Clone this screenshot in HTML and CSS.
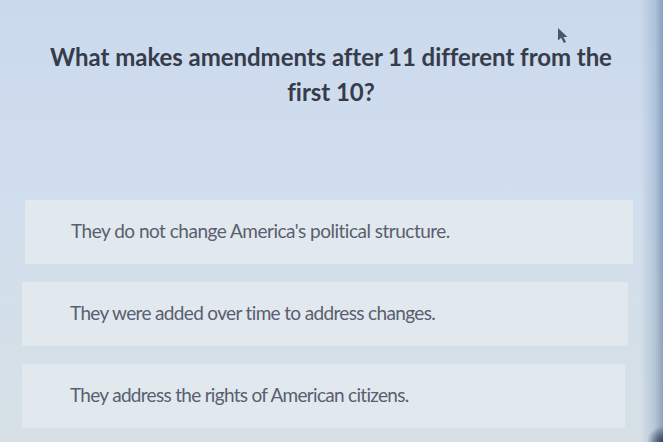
FILE: index.html
```html
<!DOCTYPE html>
<html lang="en">
<head>
<meta charset="utf-8">
<title>Question</title>
<link rel="stylesheet" href="styles.css">
</head>
<body>
<main class="screen">
  <h1 class="question">What makes amendments after 11 different from the first 10?</h1>
  <ul class="answers">
    <li class="answer">They do not change America's political structure.</li>
    <li class="answer">They were added over time to address changes.</li>
    <li class="answer">They address the rights of American citizens.</li>
  </ul>
  <svg class="cursor" width="12" height="18" viewBox="0 0 12 18" aria-hidden="true">
    <path d="M1 1 L1 13.5 L4.2 10.8 L6.8 16 L9 15 L6.5 10 L10.5 10 Z" fill="#4b566a"/>
  </svg>
</main>
</body>
</html>
```
FILE: styles.css
```css
html, body {
  margin: 0;
  height: 100%;
}

body {
  background: #cbd9ea;
  font-family: Lato, "Open Sans", sans-serif;
  overflow: hidden;
}

.screen {
  position: relative;
  height: 442px;
  box-sizing: border-box;
  padding: 39px 30px 0 22px;
  background:
    radial-gradient(circle at 663px 442px, rgba(40,55,80,0.9) 0, rgba(40,55,80,0.5) 8px, rgba(40,55,80,0) 16px),
    linear-gradient(to right, rgba(255,255,255,0) 0, rgba(255,255,255,0) 640px, rgba(120,150,185,0.35) 655px, rgba(80,110,150,0.55) 663px),
    linear-gradient(to bottom, #cad9ec 0, #d0ddef 150px, #d3dfe9 300px, #d6e0e6 442px);
}

.question {
  margin: 0 0 0 14px;
  width: 590px;
  text-align: center;
  font-size: 24px;
  line-height: 35px;
  font-weight: 700;
  color: #363c4a;
  letter-spacing: -0.05px;
}

.answers {
  list-style: none;
  margin: 91px 0 0;
  padding: 0;
  display: flex;
  flex-direction: column;
  gap: 18px;
}

.answer {
  height: 64px;
  box-sizing: border-box;
  padding-bottom: 4px;
  display: flex;
  align-items: center;
  padding-left: 46px;
  background: #e1e9ee;
  border-radius: 2px;
  font-size: 19px;
  color: #595e70;
  letter-spacing: -0.5px;
}

.answer:nth-child(1) { margin-left: 3px; margin-right: 0; }
.answer:nth-child(2) { margin-right: 5px; padding-left: 48px; letter-spacing: -0.65px; }
.answer:nth-child(3) { margin-right: 8px; padding-left: 48px; letter-spacing: -0.7px; }

.cursor {
  position: absolute;
  left: 557px;
  top: 27px;
}
```
